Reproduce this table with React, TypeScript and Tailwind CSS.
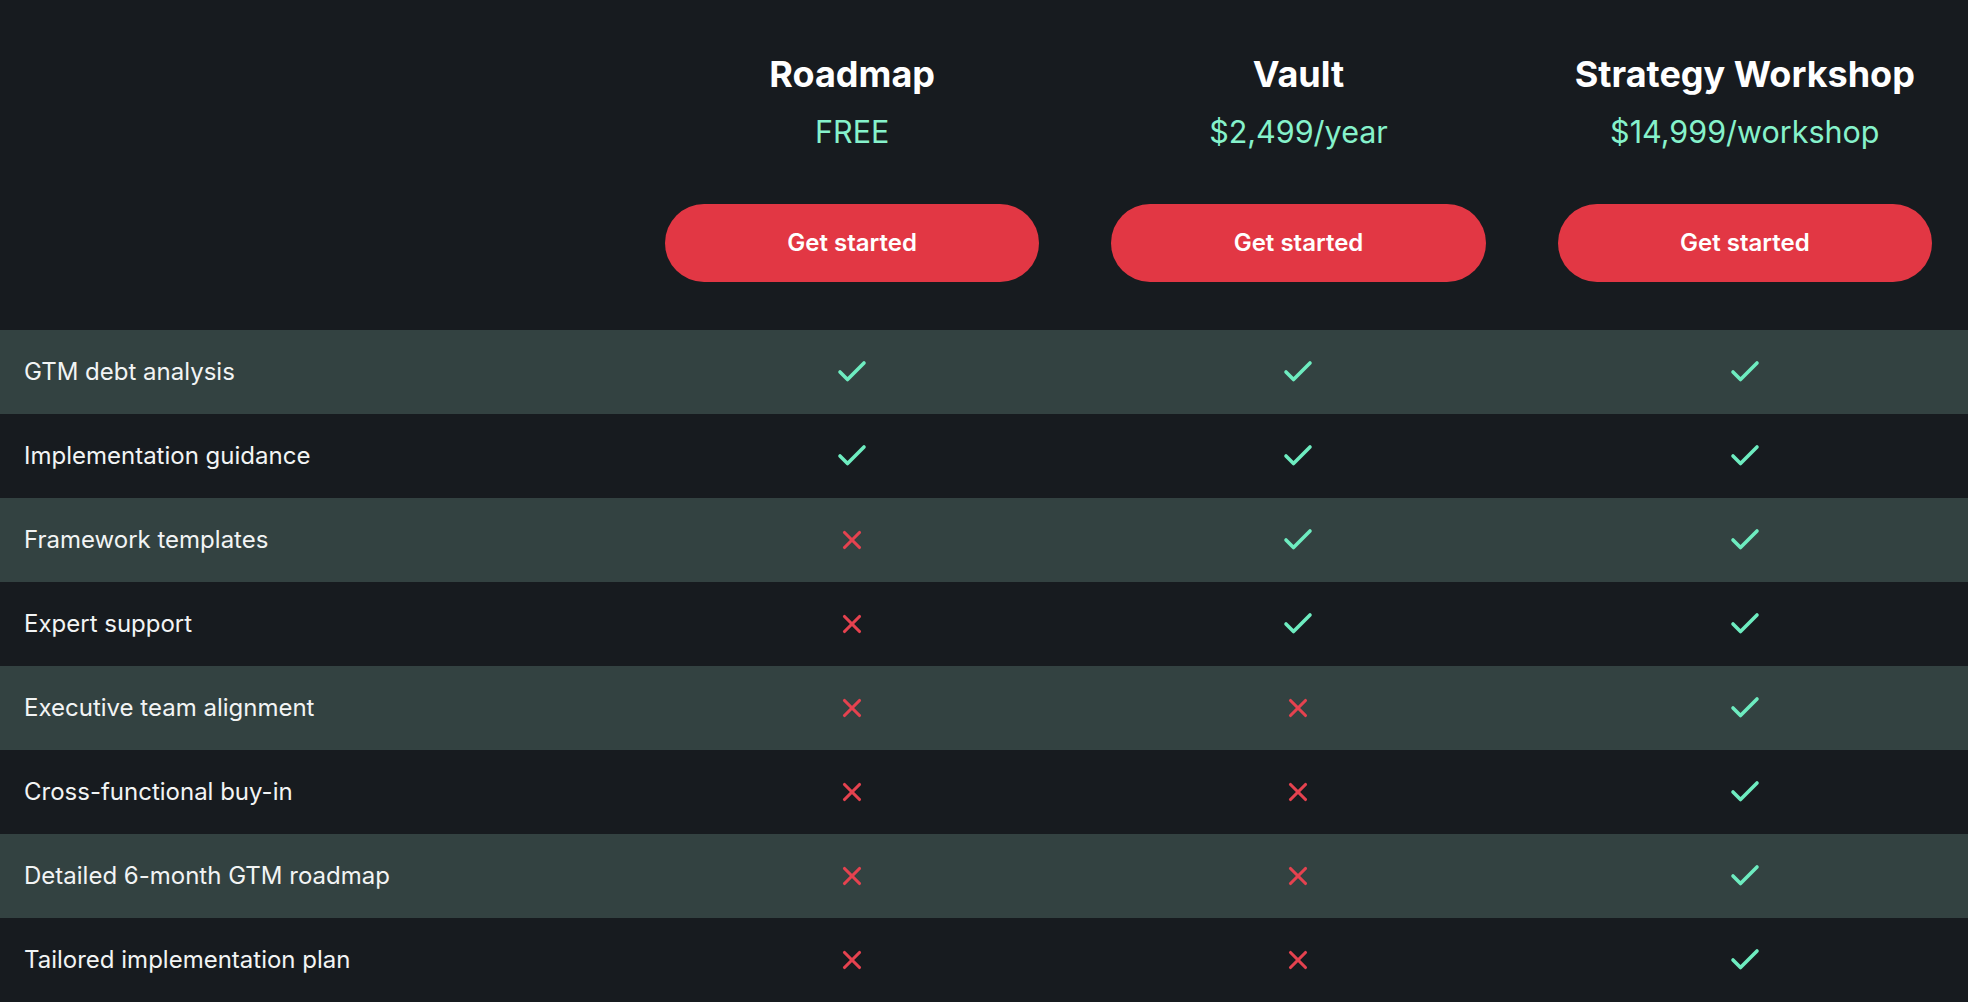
import { Check, X } from 'lucide-react'

type Plan = {
  name: string
  price: string
}

const plans: Plan[] = [
  { name: 'Roadmap', price: 'FREE' },
  { name: 'Vault', price: '$2,499/year' },
  { name: 'Strategy Workshop', price: '$14,999/workshop' },
]

// which plans include each feature: [roadmap, vault, workshop]
const features: { label: string; included: boolean[] }[] = [
  { label: 'GTM debt analysis', included: [true, true, true] },
  { label: 'Implementation guidance', included: [true, true, true] },
  { label: 'Framework templates', included: [false, true, true] },
  { label: 'Expert support', included: [false, true, true] },
  { label: 'Executive team alignment', included: [false, false, true] },
  { label: 'Cross-functional buy-in', included: [false, false, true] },
  { label: 'Detailed 6-month GTM roadmap', included: [false, false, true] },
  { label: 'Tailored implementation plan', included: [false, false, true] },
]

function App() {
  return (
    <div className="min-h-screen bg-[#171b1f] font-['Inter',sans-serif] text-white">
      <div className="grid grid-cols-[629px_1fr_1fr_1fr] pt-[54px] pb-[48px]">
        <div />
        {plans.map((plan) => (
          <div key={plan.name} className="flex flex-col items-center px-9">
            <h3 className="text-[36px] leading-[40px] font-bold">{plan.name}</h3>
            <p className="mt-5 text-[30.5px] leading-[36px] text-[#86f2cb]">{plan.price}</p>
            <button className="mt-[54px] h-[78px] w-full rounded-full bg-[#e23744] text-[24px] font-semibold text-white">
              Get started
            </button>
          </div>
        ))}
      </div>

      <div>
        {features.map((feature, i) => (
          <div
            key={feature.label}
            className={`grid h-[84px] grid-cols-[629px_1fr_1fr_1fr] items-center ${i % 2 === 0 ? 'bg-[#334241]' : 'bg-[#171b1f]'}`}
          >
            <span className="pl-6 text-[24px] text-[#f2f4f4]">{feature.label}</span>
            {feature.included.map((yes, j) => (
              <div key={j} className="flex justify-center">
                {yes ? (
                  <Check size={36} strokeWidth={2.4} className="text-[#6eecc0]" />
                ) : (
                  <X size={30} strokeWidth={2.5} className="text-[#e5424f]" />
                )}
              </div>
            ))}
          </div>
        ))}
      </div>
    </div>
  )
}

export default App
